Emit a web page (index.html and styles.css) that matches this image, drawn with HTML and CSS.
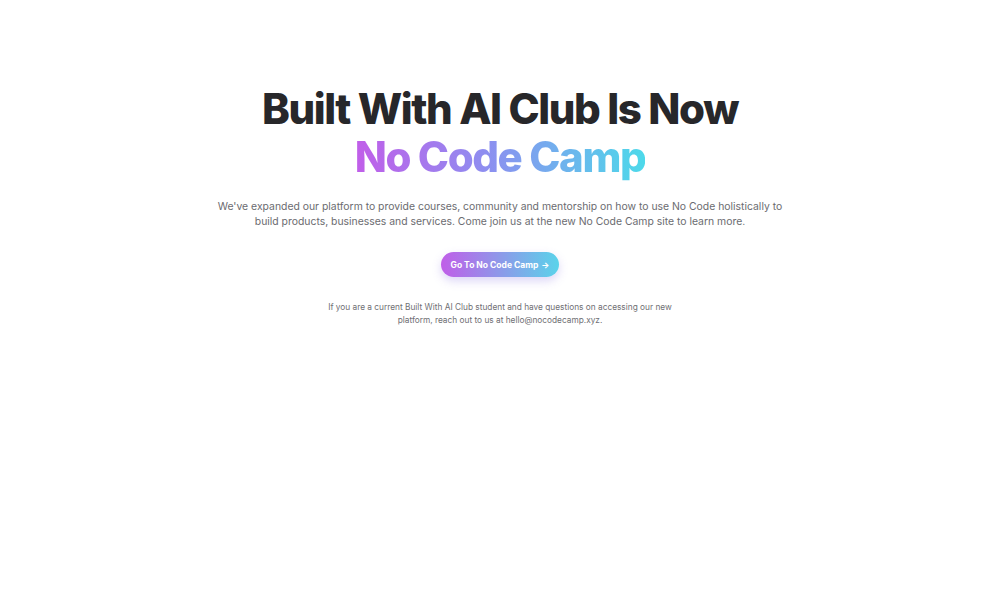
FILE: index.html
```html
<!DOCTYPE html>
<html lang="en">
<head>
<meta charset="utf-8">
<link rel="stylesheet" href="styles.css">
</head>
<body>
<main class="hero">
  <h1 class="title">Built With AI Club Is Now<br><span class="grad">No Code Camp</span></h1>
  <p class="lead">We've expanded our platform to provide courses, community and mentorship on how to use No Code holistically to build products, businesses and services. Come join us at the new No Code Camp site to learn more.</p>
  <a class="btn" href="#">Go To No Code Camp <span class="arrow">&rarr;</span></a>
  <p class="note">If you are a current Built With AI Club student and have questions on accessing our new platform, reach out to us at hello@nocodecamp.xyz.</p>
</main>
</body>
</html>
```
FILE: styles.css
```css
html, body {
  margin: 0;
  padding: 0;
  background: #fff;
}
body {
  font-family: Inter, "Noto Sans", sans-serif;
  width: 1000px;
  height: 600px;
}
.hero {
  display: flex;
  flex-direction: column;
  align-items: center;
  padding-top: 85px;
  text-align: center;
}
.title {
  margin: 0;
  font-size: 42px;
  line-height: 48px;
  font-weight: 800;
  letter-spacing: -1.4px;
  color: #27272a;
}
.grad {
  background: linear-gradient(90deg, #c15ee9 0%, #8e8ef0 45%, #4dd9ea 100%);
  -webkit-background-clip: text;
  background-clip: text;
  color: transparent;
}
.lead {
  margin: 18px 0 0;
  width: 580px;
  font-size: 10.4px;
  line-height: 15px;
  color: #6b6b70;
}
.btn {
  margin-top: 23px;
  display: inline-flex;
  align-items: center;
  height: 25px;
  padding: 0 10px;
  border-radius: 999px;
  background: linear-gradient(90deg, #c05ee8 0%, #5ad3ea 100%);
  color: #fff;
  font-size: 8.5px;
  font-weight: 700;
  text-decoration: none;
  box-shadow: 0 4px 10px rgba(140, 120, 230, 0.3);
}
.arrow {
  margin-left: 3px;
}
.note {
  margin: 24px 0 0;
  width: 360px;
  font-size: 8.3px;
  line-height: 13px;
  color: #6f6f74;
}
```
